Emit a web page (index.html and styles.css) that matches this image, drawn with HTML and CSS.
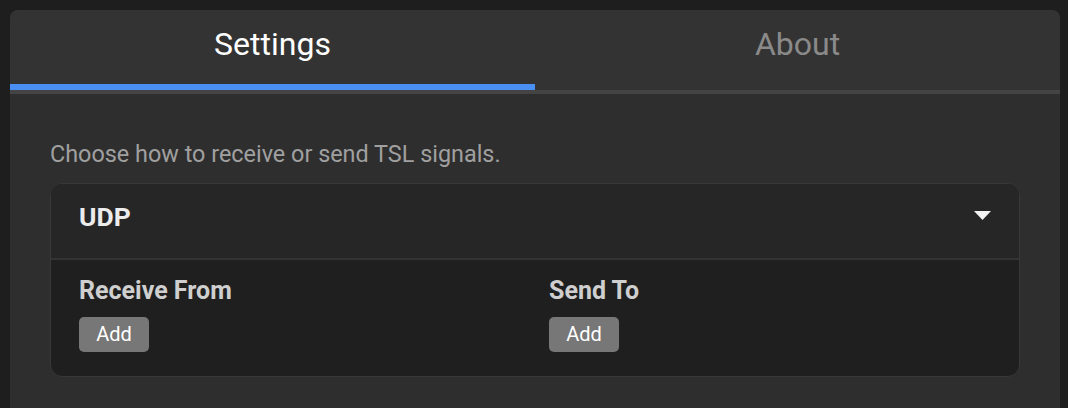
FILE: index.html
```
<!DOCTYPE html>
<html lang="en">
<head>
<meta charset="utf-8">
<title>TSL Settings</title>
<link rel="stylesheet" href="styles.css">
</head>
<body>
<div class="panel">
  <nav class="tabs">
    <div class="tab active">Settings</div>
    <div class="tab">About</div>
  </nav>
  <div class="content">
    <p class="intro">Choose how to receive or send TSL signals.</p>
    <section class="card">
      <header class="card-head">
        <span class="card-title">UDP</span>
        <svg class="caret" width="17" height="9" viewBox="0 0 17 9"><path d="M0 0H17L8.5 9Z" fill="#f2f2f2"/></svg>
      </header>
      <div class="card-body">
        <div class="col">
          <div class="label">Receive From</div>
          <button class="btn">Add</button>
        </div>
        <div class="col">
          <div class="label">Send To</div>
          <button class="btn">Add</button>
        </div>
      </div>
    </section>
  </div>
</div>
</body>
</html>
```
FILE: styles.css
```
html, body {
  overflow: hidden;
}
body {
  margin: 10px 0 0 10px;
  background: #1e1e1e;
  font-family: Roboto, "Noto Sans", sans-serif;
}
.panel {
  width: 1050px;
  background: #2e2e2e;
  border-radius: 8px 8px 0 0;
  overflow: hidden;
  padding-bottom: 40px;
}
.tabs {
  display: flex;
  background: #333333;
  border-bottom: 4px solid #444444;
}
.tab {
  flex: 1;
  text-align: center;
  font-size: 32px;
  line-height: 68px;
  padding-bottom: 6px;
  color: #8a8a8a;
  border-bottom: 6px solid transparent;
}
.tab.active {
  color: #ffffff;
  border-bottom-color: #4a90f4;
}
.content {
  padding: 45px 40px 0 40px;
}
.intro {
  margin: 0 0 14px 0;
  font-size: 23.4px;
  line-height: 30px;
  color: #a0a0a0;
}
.card {
  border: 1px solid #383838;
  border-radius: 12px;
  background: #1f1f1f;
  overflow: hidden;
}
.card-head {
  display: flex;
  align-items: center;
  justify-content: space-between;
  padding: 18px 28px 26px 28px;
  background: #262626;
  border-bottom: 2px solid #333333;
}
.card-title {
  font-size: 26.5px;
  line-height: 30px;
  font-weight: 700;
  color: #ececec;
}
.caret {
  display: block;
  margin-top: -4px;
}
.card-body {
  display: grid;
  grid-template-columns: 1fr 1fr;
  column-gap: 28px;
  padding: 17px 28px 24px 28px;
}
.label {
  font-size: 25px;
  line-height: 28px;
  font-weight: 700;
  color: #cfcfcf;
  margin-bottom: 12px;
}
.btn {
  display: block;
  width: 70px;
  height: 35px;
  padding: 0;
  border: none;
  border-radius: 5px;
  background: #777777;
  color: #ffffff;
  font-family: inherit;
  font-size: 20px;
  line-height: 35px;
}
```
